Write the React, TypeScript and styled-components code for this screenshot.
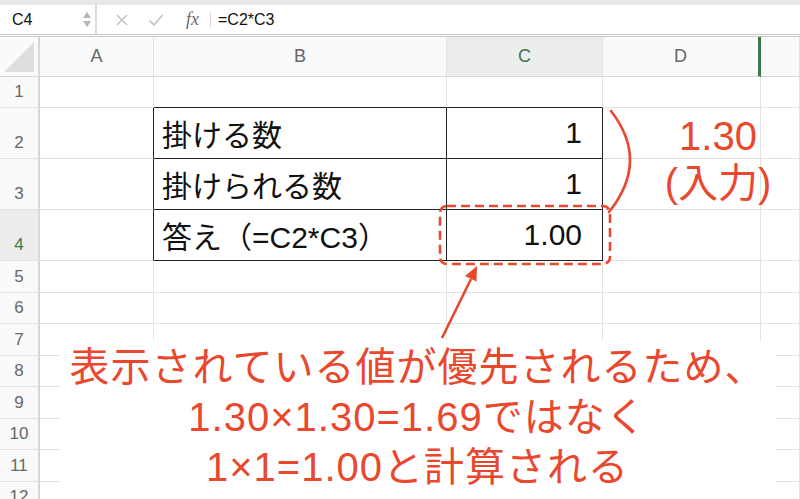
import React from "react";
import styled, { createGlobalStyle } from "styled-components";

const RED = "#E9482E";
const GRID = "#E2E2E2";
const INK = "#222";

const GlobalStyle = createGlobalStyle`
    html, body {
        margin: 0;
        padding: 0;
        background: #fff;
        overflow: hidden;
    }
    body {
        font-family: "Liberation Sans", "Noto Sans CJK JP", sans-serif;
    }
`;

const Page = styled.div`
    position: relative;
    width: 800px;
    height: 499px;
    overflow: hidden;
    background: #fff;
`;

const TopStrip = styled.div`
    height: 5px;
    background: #E7E7E7;
`;

const FormulaBar = styled.div`
    display: flex;
    align-items: stretch;
    height: 29px;
    border-bottom: 3px double #C9C9C9;
    background: #fff;
`;

const NameBox = styled.div`
    display: flex;
    align-items: center;
    justify-content: space-between;
    width: 97px;
    padding: 0 4px 0 12px;
    box-sizing: border-box;
    font-size: 16px;
    color: #111;
    border-right: 2px solid #DADADA;
`;

const Spinner = styled.div`
    display: flex;
    flex-direction: column;
    gap: 3px;
`;

const Arrow = styled.span<{ $up?: boolean }>`
    width: 0;
    height: 0;
    border-left: 4px solid transparent;
    border-right: 4px solid transparent;
    ${(p) => (p.$up ? "border-bottom: 6px solid #B5B5B5;" : "border-top: 6px solid #B5B5B5;")}
`;

const Tools = styled.div`
    display: flex;
    align-items: center;
    gap: 19px;
    padding-left: 18px;
    color: #C4C4C4;
`;

const Fx = styled.span`
    font-family: "Liberation Serif", serif;
    font-style: italic;
    font-size: 18px;
    color: #6A6A6A;
    padding-left: 3px;
`;

const FormulaInput = styled.div`
    display: flex;
    align-items: center;
    margin-left: 11px;
    padding-left: 8px;
    font-size: 16px;
    color: #111;
    position: relative;
    &::before {
        content: "";
        position: absolute;
        left: 0;
        top: 7px;
        bottom: 7px;
        border-left: 1px solid #D6D6D6;
    }
`;

const Sheet = styled.div`
    display: grid;
    grid-template-columns: 40px 114px 293px 156px 158px 1fr;
    grid-template-rows: 40px 31px 51px 51px 51px repeat(8, 31.5px);
`;

const HeadCell = styled.div<{ $active?: boolean; $mark?: boolean }>`
    display: flex;
    align-items: center;
    justify-content: center;
    background: ${(p) => (p.$active ? "#EDEDED" : "#FAFAFA")};
    color: ${(p) => (p.$active ? "#3B7A4A" : "#666")};
    font-size: 18px;
    border-right: ${(p) => (p.$mark ? "3px solid #3B7A4A" : `1px solid ${GRID}`)};
    border-bottom: 1px solid #D8D8D8;
`;

const Corner = styled.div`
    position: relative;
    background: #FAFAFA;
    border-right: 2px solid #D8D8D8;
    border-bottom: 1px solid #D8D8D8;
    &::after {
        content: "";
        position: absolute;
        right: 4px;
        bottom: 4px;
        width: 0;
        height: 0;
        border-left: 30px solid transparent;
        border-bottom: 30px solid #DEDEDE;
    }
`;

const RowHead = styled.div<{ $active?: boolean }>`
    display: flex;
    align-items: flex-end;
    justify-content: center;
    line-height: 30px;
    background: ${(p) => (p.$active ? "#EDEDED" : "#FAFAFA")};
    color: ${(p) => (p.$active ? "#3B7A4A" : "#666")};
    font-size: 17px;
    border-right: 2px solid #D8D8D8;
    border-bottom: 1px solid ${GRID};
`;

const Cell = styled.div<{ $right?: boolean; $bottom?: boolean; $align?: "left" | "right" }>`
    display: flex;
    align-items: center;
    justify-content: ${(p) => (p.$align === "right" ? "flex-end" : "flex-start")};
    padding: ${(p) => (p.$align === "right" ? "0 20px 0 0" : "0 0 0 8px")};
    font-size: 30px;
    color: #111;
    font-family: "Liberation Sans", "Noto Sans CJK JP", sans-serif;
    border-right: 1px solid ${(p) => (p.$right ? INK : GRID)};
    border-bottom: 1px solid ${(p) => (p.$bottom ? INK : GRID)};
    white-space: nowrap;
    overflow: hidden;
`;

const Marks = styled.svg`
    position: absolute;
    left: 0;
    top: 0;
    pointer-events: none;
`;

const InputNote = styled.div`
    position: absolute;
    left: 640px;
    top: 113px;
    width: 156px;
    text-align: center;
    white-space: nowrap;
    color: ${RED};
    font-size: 40px;
    line-height: 47px;
    font-family: "Liberation Sans", "Noto Sans CJK JP", sans-serif;
`;

const Callout = styled.div`
    position: absolute;
    left: 60px;
    top: 340px;
    width: 715px;
    height: 170px;
    padding-top: 2px;
    box-sizing: border-box;
    background: #fff;
    text-align: center;
    color: ${RED};
    font-size: 40px;
    line-height: 50px;
    letter-spacing: 1px;
    font-family: "Liberation Sans", "Noto Sans CJK JP", sans-serif;
`;

const columns = ["A", "B", "C", "D", ""];

type Row = { b?: string; c?: string };
const rows: Row[] = [
    {},
    { b: "掛ける数", c: "1" },
    { b: "掛けられる数", c: "1" },
    { b: "答え（=C2*C3）", c: "1.00" },
    {}, {}, {}, {}, {}, {}, {}, {},
];

export default function App() {
    return (
        <Page>
            <GlobalStyle />
            <TopStrip />
            <FormulaBar>
                <NameBox>
                    C4
                    <Spinner>
                        <Arrow $up />
                        <Arrow />
                    </Spinner>
                </NameBox>
                <Tools>
                    <svg width="14" height="14" viewBox="0 0 14 14">
                        <path d="M2 2 L12 12 M12 2 L2 12" stroke="currentColor" strokeWidth="1.6" />
                    </svg>
                    <svg width="16" height="14" viewBox="0 0 16 14">
                        <path d="M1.5 7.5 L6 12 L14.5 2" stroke="currentColor" strokeWidth="1.6" fill="none" />
                    </svg>
                    <Fx>fx</Fx>
                </Tools>
                <FormulaInput>=C2*C3</FormulaInput>
            </FormulaBar>

            <Sheet>
                <Corner />
                {columns.map((c) => (
                    <HeadCell key={c || "e"} $active={c === "C"} $mark={c === "D"}>
                        {c}
                    </HeadCell>
                ))}
                {rows.map((r, i) => {
                    const n = i + 1;
                    const inTable = n >= 2 && n <= 4;
                    const aboveTable = n === 1;
                    return (
                        <React.Fragment key={n}>
                            <RowHead $active={n === 4}>{n}</RowHead>
                            <Cell $right={inTable} />
                            <Cell $right={inTable} $bottom={inTable || aboveTable}>
                                {r.b}
                            </Cell>
                            <Cell $right={inTable} $bottom={inTable || aboveTable} $align="right">
                                {r.c}
                            </Cell>
                            <Cell />
                            <Cell />
                        </React.Fragment>
                    );
                })}
            </Sheet>

            <Marks width="800" height="499" viewBox="0 0 800 499">
                <path d="M611 111 Q650 161 609 212" stroke={RED} strokeWidth="2.6" fill="none" strokeLinecap="round" />
                <rect x="440" y="206" width="170" height="58" rx="7" stroke={RED} strokeWidth="2.6" fill="none" strokeDasharray="9 5" />
                <line x1="442" y1="338" x2="471" y2="279" stroke={RED} strokeWidth="2.6" />
                <polygon points="477,266 476.5,281.5 465,276" fill={RED} />
            </Marks>

            <InputNote>
                1.30
                <br />
                (入力)
            </InputNote>

            <Callout>
                表示されている値が優先されるため、
                <br />
                1.30×1.30=1.69ではなく
                <br />
                1×1=1.00と計算される
            </Callout>
        </Page>
    );
}
